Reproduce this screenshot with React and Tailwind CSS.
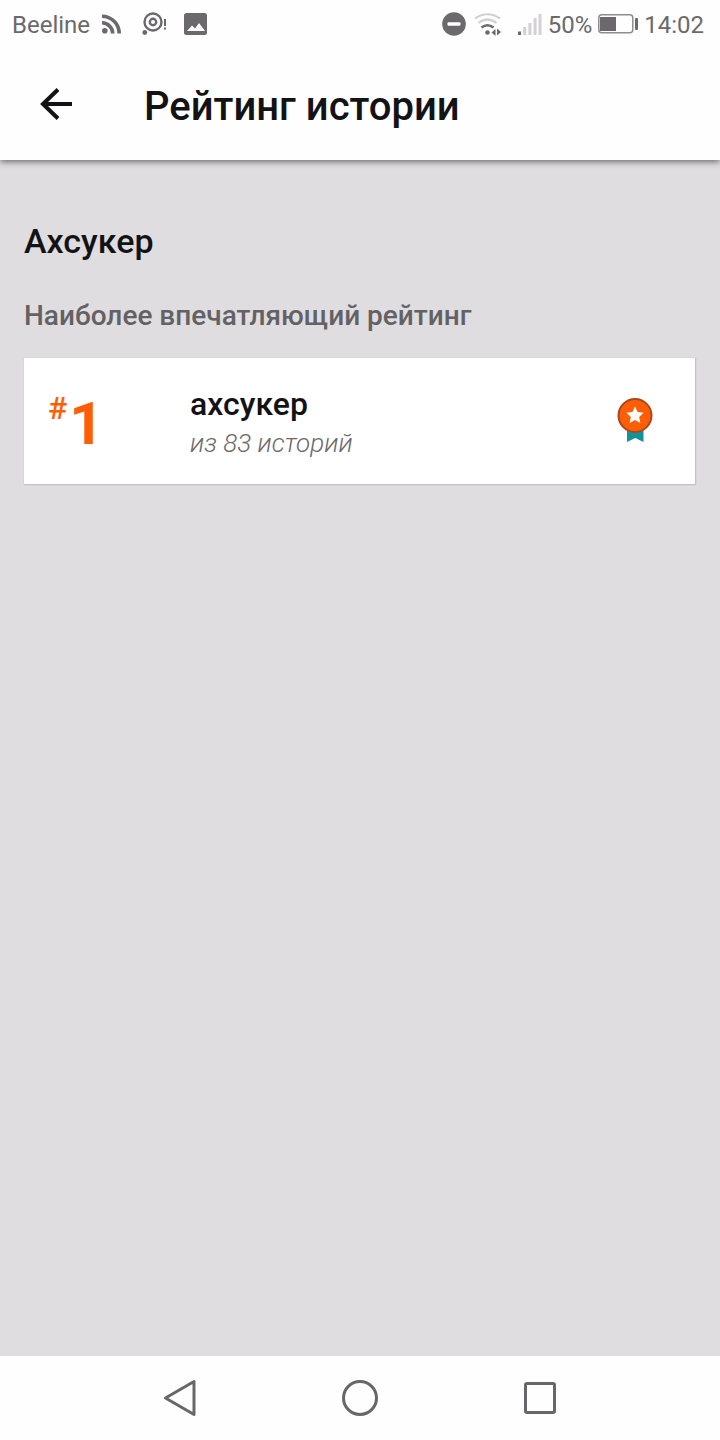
import React from 'react';

const rankings = [
  { id: 1, rank: 1, tag: 'ахсукер', total: 'из 83 историй' },
];

const StatusBar = () => {
  return (
    <div className="flex h-12 items-center justify-between pl-3 pr-4 text-2xl text-[#6b696c]">
      <div className="flex items-center">
        <span className="pt-px">Beeline</span>
        {/* Feed */}
        <svg className="ml-3 h-5 w-5" viewBox="0 0 20 20" fill="none" stroke="currentColor" strokeWidth="3.6">
          <circle cx="2.8" cy="16.8" r="2.8" fill="currentColor" stroke="none" />
          <path d="M0 8.8A10.7 10.7 0 0 1 10.7 19.5" />
          <path d="M0 2.3A17.2 17.2 0 0 1 17.2 19.5" />
        </svg>
        {/* Network search */}
        <svg className="ml-5 h-6 w-6" viewBox="0 0 24 24" fill="none" stroke="currentColor">
          <circle cx="11" cy="10" r="8.5" strokeWidth="2.4" />
          <circle cx="11" cy="10" r="3.2" strokeWidth="2.4" />
          <circle cx="2.8" cy="20.5" r="2.4" fill="currentColor" stroke="none" />
          <path d="M23 7v7M23 15.5v2" strokeWidth="2" />
        </svg>
        {/* Picture */}
        <svg className="ml-[18px] h-6 w-6" viewBox="0 0 24 24">
          <rect x="0" y="1" width="23" height="22" rx="2.5" fill="currentColor" />
          <path d="M3 19l5-5.5 3 3 4-5.5 6 8z" fill="#fff" />
        </svg>
      </div>

      <div className="flex items-center">
        {/* Do not disturb */}
        <svg className="h-6 w-6" viewBox="0 0 24 24">
          <circle cx="12" cy="12" r="11.8" fill="currentColor" />
          <rect x="5.5" y="10.2" width="13" height="3.6" rx="1" fill="#fff" />
        </svg>
        {/* Wi-Fi */}
        <svg className="ml-2 h-6 w-7" viewBox="0 0 28 24" fill="none" strokeWidth="2.2">
          <path d="M1 6.5Q13.5 -2 26 6.5" stroke="#d2d0d3" />
          <path d="M4.5 11Q13.5 4 22.5 11" stroke="#d2d0d3" />
          <path d="M7.5 15.5Q13.5 11 19.5 15.5" stroke="currentColor" strokeWidth="2.6" />
          <circle cx="13.5" cy="20.5" r="2.3" fill="currentColor" />
          <path d="M21.5 17v7l-4-3.500zM23 16.500v7l4-3.500z" fill="currentColor" />
        </svg>
        {/* Mobile signal */}
        <svg className="ml-4 h-6 w-6" viewBox="0 0 24 24" fill="#d2d0d3">
          <rect x="0" y="19.5" width="3" height="3.5" fill="currentColor" />
          <rect x="5.2" y="15" width="3" height="8" />
          <rect x="10.4" y="11" width="3" height="12" />
          <rect x="15.6" y="6" width="3" height="17" />
          <rect x="20.5" y="2" width="3" height="21" />
        </svg>
        <span className="ml-1.5 pt-px">50%</span>
        {/* Battery */}
        <svg className="ml-1.5 h-5 w-10" viewBox="0 0 40 20">
          <rect x="0.8" y="0.8" width="34" height="18" rx="3" fill="none" stroke="#8f8d90" strokeWidth="1.5" />
          <rect x="2" y="3" width="16" height="14" fill="currentColor" />
          <rect x="37" y="4" width="3" height="12" rx="1" fill="currentColor" />
        </svg>
        <span className="ml-1.5 pt-px">14:02</span>
      </div>
    </div>
  );
};

const Header = ({ title }) => {
  return (
    <header className="flex h-28 items-center px-8">
      <button type="button" aria-label="Назад" className="flex h-12 w-12 items-center justify-center text-[#131215]">
        <svg className="h-8 w-8" viewBox="0 0 32 32" fill="none" stroke="currentColor" strokeWidth="4">
          <path d="M18 1.5L3 16l15 14.5M2.5 16H32" />
        </svg>
      </button>
      <h1 className="ml-16 pt-1.5 text-[40px] leading-12 font-medium text-[#131215]">{title}</h1>
    </header>
  );
};

const Medal = () => {
  return (
    <svg className="mb-2 h-11 w-9" viewBox="0 0 36 44">
      <path d="M10 30h16.5v14l-8.250-4L10 44z" fill="#119399" />
      <circle cx="18" cy="17.5" r="16.5" fill="#ff5e06" stroke="#a9481f" strokeWidth="2" />
      <path
        d="M18 8.500l2.600 5.500 6 .8-4.400 4.200 1.100 6-5.300-2.900-5.300 2.900 1.100-6-4.400-4.200 6-.8z"
        fill="#fff"
      />
    </svg>
  );
};

const RankingCard = ({ item }) => {
  return (
    <li className="flex items-center border-r border-b border-[#c4c2c5] bg-white pt-[27px] pr-[42px] pb-[21px] pl-6 shadow-[0_0_1px_rgba(0,0,0,0.2)]">
      <div className="flex w-[142px] shrink-0 items-start pb-2 text-[#ff5e06]">
        <span className="text-[32px] leading-10 font-medium">#</span>
        <span className="ml-0.5 pt-2 text-[60px] leading-14 font-bold">{item.rank}</span>
      </div>
      <div className="flex-1">
        <h3 className="text-[32px] leading-[38px] font-medium text-[#131215]">{item.tag}</h3>
        <p className="text-[26px] leading-10 font-light text-[#6b696c] italic">{item.total}</p>
      </div>
      <Medal />
    </li>
  );
};

const NavigationBar = () => {
  return (
    <nav className="flex h-[84px] items-center justify-center gap-[132px] bg-[#fefefe] text-[#68666a]">
      <button type="button" aria-label="Назад" className="flex h-12 w-12 items-center justify-center">
        <svg className="h-10 w-10" viewBox="0 0 40 40" fill="none" stroke="currentColor" strokeWidth="3" strokeLinejoin="round">
          <path d="M34 3.5v33L5.5 20z" />
        </svg>
      </button>
      <button type="button" aria-label="Домой" className="flex h-12 w-12 items-center justify-center">
        <svg className="h-10 w-10" viewBox="0 0 40 40" fill="none" stroke="currentColor" strokeWidth="3">
          <circle cx="20" cy="20" r="16.5" />
        </svg>
      </button>
      <button type="button" aria-label="Недавние" className="flex h-12 w-12 items-center justify-center">
        <svg className="h-10 w-10" viewBox="0 0 40 40" fill="none" stroke="currentColor" strokeWidth="3">
          <rect x="5.5" y="5.5" width="29" height="29" rx="1.5" />
        </svg>
      </button>
    </nav>
  );
};

const App = () => {
  return (
    <div className="flex min-h-screen flex-col bg-[#dfdde0] font-[Roboto,sans-serif]">
      <div className="relative bg-[#fefefe] shadow-[0_2px_6px_rgba(0,0,0,0.5)]">
        <StatusBar />
        <Header title="Рейтинг истории" />
      </div>

      <main className="flex-1 px-6 pt-15">
        <h2 className="text-[34px] leading-[42px] font-medium text-[#131215]">Ахсукер</h2>
        <p className="mt-9 text-[28px] leading-9 font-medium text-[#636164]">Наиболее впечатляющий рейтинг</p>
        <ul className="mt-6">
          {rankings.map((item) => (
            <RankingCard key={item.id} item={item} />
          ))}
        </ul>
      </main>

      <NavigationBar />
    </div>
  );
};

export default App;
